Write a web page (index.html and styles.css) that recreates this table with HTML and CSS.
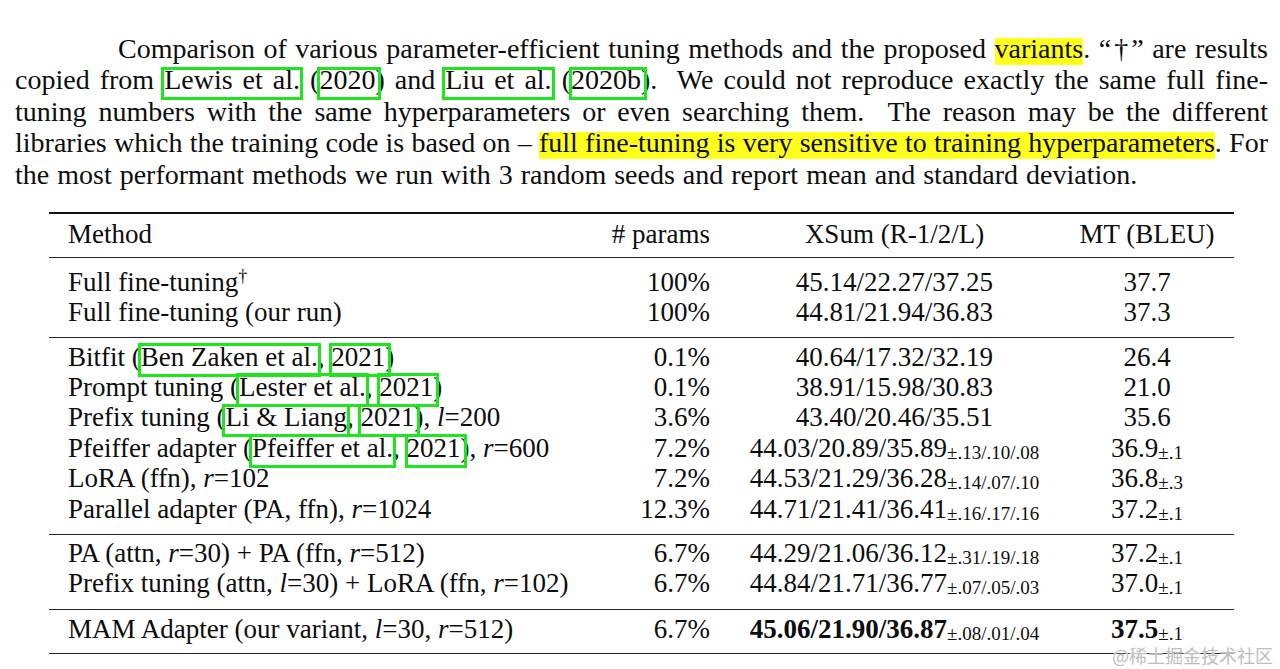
FILE: index.html
```html
<!DOCTYPE html>
<html lang="en">
<head>
<meta charset="utf-8">
<title>Parameter-efficient tuning comparison</title>
<link rel="stylesheet" href="styles.css">
</head>
<body>
<div class="page">
  <p class="caption">
    <span class="line first">Comparison of various parameter-efficient tuning methods and the proposed <span class="hl">variants</span>. “†” are results</span>
    <span class="line">copied from <span class="cite name">Lewis et al.</span> (<span class="cite year">2020</span>) and <span class="cite name">Liu et al.</span> (<span class="cite year">2020b</span>).&nbsp; We could not reproduce exactly the same full fine-</span>
    <span class="line">tuning numbers with the same hyperparameters or even searching them.&nbsp; The reason may be the different</span>
    <span class="line">libraries which the training code is based on – <span class="hl">full fine-tuning is very sensitive to training hyperparameters</span>. For</span>
    <span class="line last">the most performant methods we run with 3 random seeds and report mean and standard deviation.</span>
  </p>

  <table class="results">
    <colgroup>
      <col class="c-method">
      <col class="c-params">
      <col class="c-xsum">
      <col class="c-mt">
    </colgroup>
    <thead>
      <tr>
        <th class="method">Method</th>
        <th class="params"># params</th>
        <th class="xsum">XSum (R-1/2/L)</th>
        <th class="mt">MT (BLEU)</th>
      </tr>
    </thead>
    <tbody class="g1">
      <tr>
        <td class="method">Full fine-tuning<sup class="dag">†</sup></td>
        <td class="params">100%</td>
        <td class="xsum">45.14/22.27/37.25</td>
        <td class="mt">37.7</td>
      </tr>
      <tr>
        <td class="method">Full fine-tuning (our run)</td>
        <td class="params">100%</td>
        <td class="xsum">44.81/21.94/36.83</td>
        <td class="mt">37.3</td>
      </tr>
    </tbody>
    <tbody class="g2">
      <tr>
        <td class="method">Bitfit (<span class="cite name">Ben Zaken et al.</span>, <span class="cite year">2021</span>)</td>
        <td class="params">0.1%</td>
        <td class="xsum">40.64/17.32/32.19</td>
        <td class="mt">26.4</td>
      </tr>
      <tr>
        <td class="method">Prompt tuning (<span class="cite name">Lester et al.</span>, <span class="cite year">2021</span>)</td>
        <td class="params">0.1%</td>
        <td class="xsum">38.91/15.98/30.83</td>
        <td class="mt">21.0</td>
      </tr>
      <tr>
        <td class="method">Prefix tuning (<span class="cite name">Li &amp; Liang</span>, <span class="cite year">2021</span>), <i>l</i>=200</td>
        <td class="params">3.6%</td>
        <td class="xsum">43.40/20.46/35.51</td>
        <td class="mt">35.6</td>
      </tr>
      <tr>
        <td class="method">Pfeiffer adapter (<span class="cite name">Pfeiffer et al.</span>, <span class="cite year">2021</span>), <i>r</i>=600</td>
        <td class="params">7.2%</td>
        <td class="xsum">44.03/20.89/35.89<sub class="sd">±.13/.10/.08</sub></td>
        <td class="mt">36.9<sub class="sd">±.1</sub></td>
      </tr>
      <tr>
        <td class="method">LoRA (ffn), <i>r</i>=102</td>
        <td class="params">7.2%</td>
        <td class="xsum">44.53/21.29/36.28<sub class="sd">±.14/.07/.10</sub></td>
        <td class="mt">36.8<sub class="sd">±.3</sub></td>
      </tr>
      <tr>
        <td class="method">Parallel adapter (PA, ffn), <i>r</i>=1024</td>
        <td class="params">12.3%</td>
        <td class="xsum">44.71/21.41/36.41<sub class="sd">±.16/.17/.16</sub></td>
        <td class="mt">37.2<sub class="sd">±.1</sub></td>
      </tr>
    </tbody>
    <tbody class="g3">
      <tr>
        <td class="method">PA (attn, <i>r</i>=30) + PA (ffn, <i>r</i>=512)</td>
        <td class="params">6.7%</td>
        <td class="xsum">44.29/21.06/36.12<sub class="sd">±.31/.19/.18</sub></td>
        <td class="mt">37.2<sub class="sd">±.1</sub></td>
      </tr>
      <tr>
        <td class="method">Prefix tuning (attn, <i>l</i>=30) + LoRA (ffn, <i>r</i>=102)</td>
        <td class="params">6.7%</td>
        <td class="xsum">44.84/21.71/36.77<sub class="sd">±.07/.05/.03</sub></td>
        <td class="mt">37.0<sub class="sd">±.1</sub></td>
      </tr>
    </tbody>
    <tbody class="g4">
      <tr>
        <td class="method">MAM Adapter (our variant, <i>l</i>=30, <i>r</i>=512)</td>
        <td class="params">6.7%</td>
        <td class="xsum"><b>45.06/21.90/36.87</b><sub class="sd">±.08/.01/.04</sub></td>
        <td class="mt"><b>37.5</b><sub class="sd">±.1</sub></td>
      </tr>
    </tbody>
  </table>

  <div class="watermark">@稀土掘金技术社区</div>
</div>
</body>
</html>
```

FILE: styles.css
```css
html, body {
  margin: 0;
  padding: 0;
  background: #ffffff;
}

body {
  font-family: "Liberation Serif", "Times New Roman", serif;
  color: #0d0d0d;
}

.page {
  position: relative;
  width: 1280px;
  height: 669px;
  overflow: hidden;
}

/* ---------- caption ---------- */
.caption {
  margin: 0;
  padding: 32.5px 12px 0 15px;
  font-size: 28px;
  line-height: 31.5px;
}

.caption .line {
  display: block;
  text-align: justify;
  text-align-last: justify;
  word-spacing: -1.5px;
}

.caption .line.first {
  padding-left: 103px;
}

.caption .line.last {
  text-align-last: left;
  word-spacing: 1px;
}

.hl {
  padding-bottom: 3px;
  background: linear-gradient(#ffff1c, #ffff1c) 0 5px / 100% 27px no-repeat;
}

/* citation link boxes */
.cite {
  position: relative;
}

.cite::after {
  content: "";
  position: absolute;
  top: 3px;
  bottom: -5px;
  left: -3px;
  right: -3px;
  border: 3px solid #1ee51e;
  pointer-events: none;
}

.cite.year::after {
  left: -2px;
  right: -6px;
}

/* ---------- table ---------- */
.results {
  margin: 21.5px 0 0 49px;
  width: 1185px;
  table-layout: fixed;
  border-collapse: separate;
  border-spacing: 0;
  font-size: 27px;
  line-height: 30.4px;
}

.c-method { width: 545px; }
.c-params { width: 135px; }
.c-xsum   { width: 331px; }
.c-mt     { width: 174px; }

.results th,
.results td {
  padding: 0;
  font-weight: normal;
  white-space: nowrap;
  vertical-align: baseline;
}

.results .method { text-align: left; padding-left: 19px; }
.results .params { text-align: right; padding-right: 19px; }
.results .xsum   { text-align: center; }
.results .mt     { text-align: center; }

.results thead th {
  border-top: 2px solid #111;
  border-bottom: 1px solid #222;
  padding-top: 5px;
  padding-bottom: 8px;
}

.results tbody tr:last-child td {
  border-bottom: 1px solid #222;
}

.g1 tr:first-child td { padding-top: 8.6px; }
.g1 tr:last-child td  { padding-bottom: 9.2px; }
.g2 tr:first-child td { padding-top: 4px; }
.g2 tr:last-child td  { padding-bottom: 9.6px; }
.g3 tr:first-child td { padding-top: 3px; }
.g3 tr:last-child td  { padding-bottom: 10.2px; }
.g4 tr:first-child td { padding-top: 4px; }
.g4 tr:last-child td  { padding-bottom: 8.6px; border-bottom: 2px solid #111; }

.results .cite::after {
  top: 1.5px;
  bottom: -5px;
}

.results i {
  font-style: italic;
}

.results b {
  font-weight: bold;
}

.dag {
  font-size: 18px;
  line-height: 0;
  vertical-align: 9px;
  color: #0d0d0d;
}

.sd {
  font-size: 19px;
  line-height: 0;
  vertical-align: -2px;
}

/* ---------- watermark ---------- */
.watermark {
  position: absolute;
  right: 7px;
  top: 645px;
  font-family: "Noto Sans CJK SC", "Noto Sans", sans-serif;
  font-size: 18px;
  line-height: 20px;
  color: #bdbdbd;
  text-shadow: 0 0 2px #ffffff, 0 0 1px #ffffff;
}
```
